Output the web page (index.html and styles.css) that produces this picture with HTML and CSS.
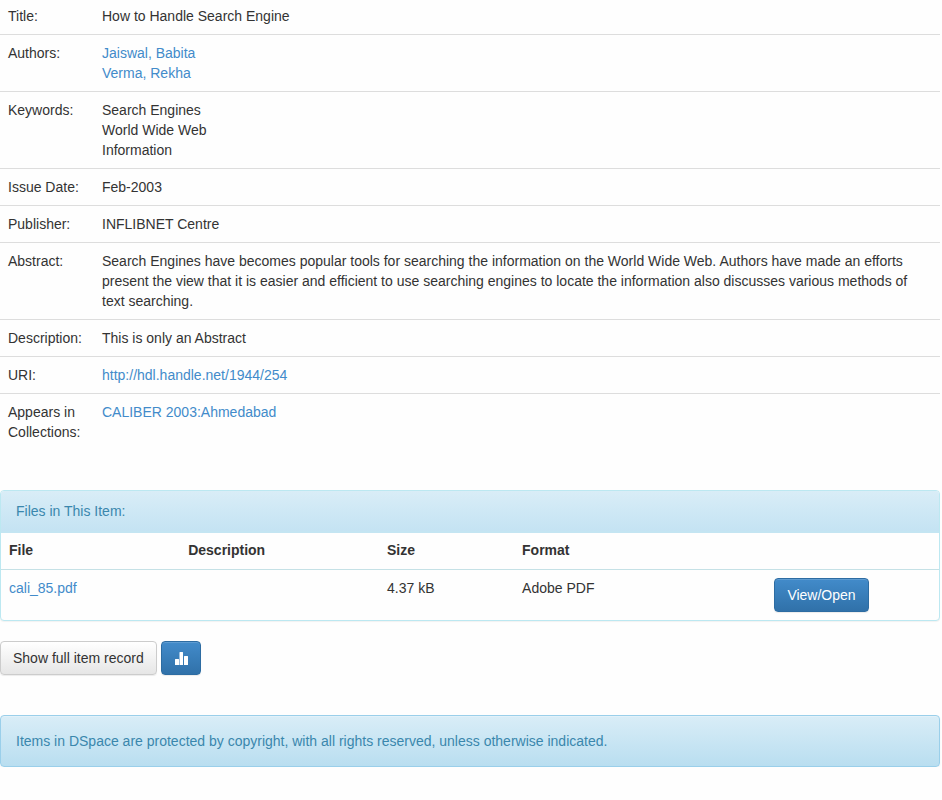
FILE: index.html
```html
<!DOCTYPE html>
<html lang="en">
<head>
<meta charset="utf-8">
<title>How to Handle Search Engine</title>
<link rel="stylesheet" href="styles.css">
</head>
<body>
<main class="container">
  <table class="table item-display">
    <tbody>
      <tr><td class="label">Title:</td><td>How to Handle Search Engine</td></tr>
      <tr><td class="label">Authors:</td><td><a href="#">Jaiswal, Babita</a><br><a href="#">Verma, Rekha</a></td></tr>
      <tr><td class="label">Keywords:</td><td>Search Engines<br>World Wide Web<br>Information</td></tr>
      <tr><td class="label">Issue Date:</td><td>Feb-2003</td></tr>
      <tr><td class="label">Publisher:</td><td>INFLIBNET Centre</td></tr>
      <tr><td class="label">Abstract:</td><td>Search Engines have becomes popular tools for searching the information on the World Wide Web. Authors have made an efforts present the view that it is easier and efficient to use searching engines to locate the information also discusses various methods of text searching.</td></tr>
      <tr><td class="label">Description:</td><td>This is only an Abstract</td></tr>
      <tr><td class="label">URI:</td><td><a href="#">http://hdl.handle.net/1944/254</a></td></tr>
      <tr><td class="label">Appears in Collections:</td><td><a href="#">CALIBER 2003:Ahmedabad</a></td></tr>
    </tbody>
  </table>

  <section class="panel">
    <div class="panel-heading">Files in This Item:</div>
    <table class="table files">
      <colgroup><col class="col-file"><col class="col-desc"><col class="col-size"><col class="col-format"><col></colgroup>
      <thead>
        <tr><th>File</th><th>Description</th><th>Size</th><th>Format</th><td></td></tr>
      </thead>
      <tbody>
        <tr><td><a href="#">cali_85.pdf</a></td><td></td><td>4.37 kB</td><td>Adobe PDF</td><td><a class="btn btn-primary" href="#">View/Open</a></td></tr>
      </tbody>
    </table>
  </section>

  <div class="actions">
    <a class="btn btn-default" href="#">Show full item record</a>
    <a class="btn btn-primary" href="#" aria-label="Statistics"><svg class="icon" viewBox="0 0 14 14" aria-hidden="true"><path fill="currentColor" d="M1.500 7h3q.5 0 .5.5V13H1V7.500q0-.5.5-.5zM6 0h2.500q.5 0 .5.5V13H5.500V.5q0-.5.5-.5zM10.500 4h3q.5 0 .5.5V13h-4V4.500q0-.5.5-.5z"/></svg></a>
  </div>

  <p class="alert">Items in DSpace are protected by copyright, with all rights reserved, unless otherwise indicated.</p>
</main>
</body>
</html>
```
FILE: styles.css
```css
* { box-sizing: border-box; }
body {
  margin: 0;
  font: 14px/20px "Liberation Sans", Arial, sans-serif;
  color: #333;
  background: #fefefe;
}
a { color: #428bca; text-decoration: none; }
.container { margin-right: 2px; }

.table { width: 100%; border-collapse: collapse; }
.table td, .table th {
  padding: 8px;
  text-align: left;
  vertical-align: top;
  border-top: 1px solid #ddd;
}
.item-display { margin-bottom: 40px; }
.item-display .label { width: 94px; }
.item-display tr:first-child td { border-top: 0; padding-top: 6px; }

.panel {
  margin-bottom: 20px;
  border: 1px solid #bce8f1;
  border-radius: 4px;
  background: #fefefe;
  box-shadow: 0 1px 1px rgba(0, 0, 0, .05);
}
.panel-heading {
  padding: 10px 15px;
  color: #3a87ad;
  background: linear-gradient(#d9edf7, #c4e3f3);
  border-bottom: 2px solid #c4e5f2;
  border-radius: 3px 3px 0 0;
}
.files { table-layout: fixed; border-collapse: separate; border-spacing: 0; }
.files thead th, .files thead td {
  padding: 7px 8px 9px;
  border-top: 0;
  border-bottom: 1px solid #c5e1e6;
}
.files tbody td { border-top: 0; }
.col-file { width: 19.1%; }
.col-desc { width: 21.2%; }
.col-size { width: 14.4%; }
.col-format { width: 26.9%; }

.btn {
  display: inline-block;
  padding: 6px 12px;
  border: 1px solid;
  border-radius: 4px;
  white-space: nowrap;
  vertical-align: top;
}
.btn-default {
  color: #333;
  border-color: #ccc;
  background: linear-gradient(#fff, #e6e6e6);
  box-shadow: inset 0 1px 0 rgba(255, 255, 255, .15), 0 1px 1px rgba(0, 0, 0, .075);
}
.btn-primary {
  color: #fff;
  border-color: #2d6ca2;
  background: linear-gradient(#428bca, #3071a9);
  box-shadow: inset 0 1px 0 rgba(255, 255, 255, .15), 0 1px 1px rgba(0, 0, 0, .075);
}
.actions { display: flex; gap: 4px; margin-bottom: 40px; }
.icon { display: block; width: 14px; height: 14px; margin: 4px 0 2px; }

.alert {
  margin: 0;
  padding: 15px;
  color: #3a87ad;
  border: 1px solid #9acfea;
  border-radius: 4px;
  background: linear-gradient(#d9edf7, #b9def0);
  box-shadow: inset 0 1px 0 rgba(255, 255, 255, .25), 0 1px 2px rgba(0, 0, 0, .05);
}
```
